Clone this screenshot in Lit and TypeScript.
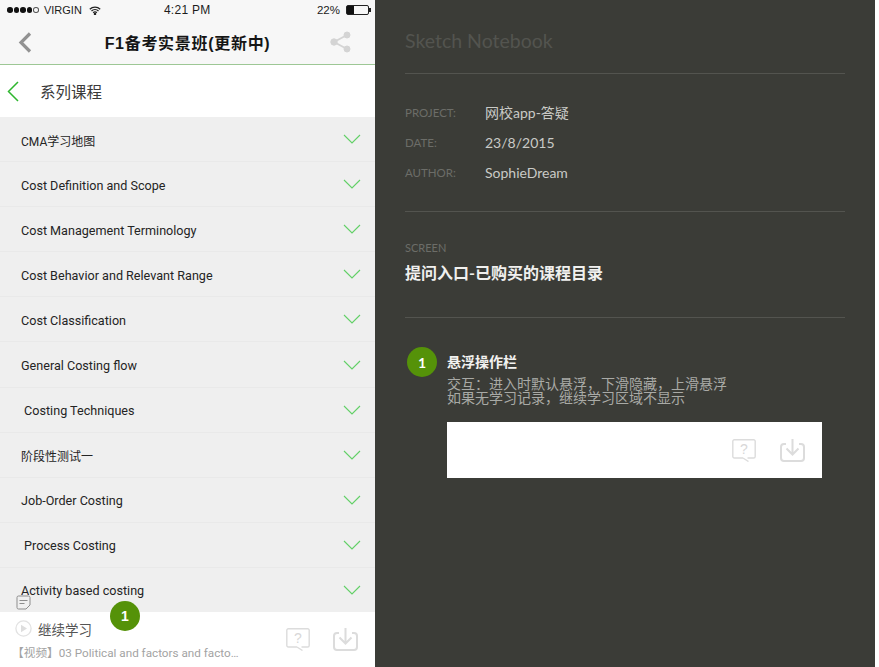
import { LitElement, html, css, svg } from 'lit';
import { customElement } from 'lit/decorators.js';

const COURSES = [
  'CMA学习地图',
  'Cost Definition and Scope',
  'Cost Management Terminology',
  'Cost Behavior and Relevant Range',
  'Cost Classification',
  'General Costing flow',
  '\u00a0Costing Techniques',
  '阶段性测试一',
  'Job-Order Costing',
  '\u00a0Process Costing',
  'Activity based costing',
];

const META = [
  ['PROJECT:', '网校app-答疑'],
  ['DATE:', '23/8/2015'],
  ['AUTHOR:', 'SophieDream'],
];

const askIcon = html`<svg width="24" height="23" viewBox="0 0 24 23" fill="none">
  <path d="M11 19H2.300A1.500 1.500 0 0 1 .8 17.500V2.300A1.500 1.500 0 0 1 2.300 .8h19.400a1.500 1.500 0 0 1 1.500 1.500v15.200a1.500 1.500 0 0 1-1.500 1.500H15.500M11 19l5.500 3.500" stroke="#dcdcdc" stroke-width="1.4"/>
  <text x="12" y="15" text-anchor="middle" class="ask-mark">?</text>
</svg>`;

const saveIcon = html`<svg width="25" height="23" viewBox="0 0 25 23" fill="none" stroke="#dcdcdc" stroke-width="2">
  <path d="M6 5H4A3 3 0 0 0 1 8v11a3 3 0 0 0 3 3h17a3 3 0 0 0 3-3V8a3 3 0 0 0-3-3h-2"/>
  <path d="M12.500 0v15M6.500 9.500l6 6 6-6"/>
</svg>`;

const chevronDown = svg`<path d="M1 1l8 8 8-8" stroke="#62d067" stroke-width="1.1" fill="none"/>`;

@customElement('app-root')
export class AppRoot extends LitElement {
  render() {
    return html`
      <section class="phone">
        <div class="status">
          <span class="signal">
            <i></i><i></i><i></i><i></i><i class="off"></i>
          </span>
          <span class="carrier">VIRGIN</span>
          <svg class="wifi" width="12" height="9" viewBox="0 0 12 9" fill="none" stroke="#222" stroke-width="1.3">
            <path d="M.8 3.200a7.400 7.400 0 0 1 10.400 0M2.500 5a5 5 0 0 1 7 0M4.200 6.700a2.500 2.500 0 0 1 3.600 0"/>
            <circle cx="6" cy="8" r=".6" fill="#222"/>
          </svg>
          <span class="clock">4:21 PM</span>
          <span class="pct">22%</span>
          <span class="battery"><b></b></span>
        </div>
        <div class="nav">
          <svg width="14" height="21" viewBox="0 0 14 21" fill="none" stroke="#929292" stroke-width="3.200">
            <path d="M12 1.500L3 10.500l9 9"/>
          </svg>
          <span class="nav-title">F1备考实景班(更新中)</span>
          <svg class="share" width="21" height="22" viewBox="0 0 21 22" fill="#d4d4d4" stroke="#d4d4d4">
            <circle cx="17" cy="4" r="3"/><circle cx="4" cy="11" r="3.200"/><circle cx="17" cy="18" r="3"/>
            <path d="M17 4L4 11l13 7" fill="none" stroke-width="1.800"/>
          </svg>
        </div>
        <div class="series">
          <svg width="12" height="21" viewBox="0 0 12 21" fill="none" stroke="#2eb62e" stroke-width="1.500">
            <path d="M11 1L1.500 10.500 11 20"/>
          </svg>
          <span>系列课程</span>
        </div>
        <div class="list">
          ${COURSES.map(
            (name) => html`
              <div class="row">
                <span class=${/[^\x00-\xff]/.test(name) ? 'zh' : ''}>${name}</span>
                <svg width="18" height="10" viewBox="0 0 18 10">${chevronDown}</svg>
              </div>
            `,
          )}
        </div>
        <div class="bar">
          <div class="bar-text">
            <div class="resume">
              <svg width="17" height="17" viewBox="0 0 17 17">
                <circle cx="8.500" cy="8.500" r="7.600" fill="none" stroke="#e2e2e2" stroke-width="1.300"/>
                <path d="M6 4.800v7.400l6-3.700z" fill="#dedede"/>
              </svg>
              <span>继续学习</span>
            </div>
            <div class="last">【视频】03 Political and factors and facto…</div>
          </div>
          <div class="bar-actions">${askIcon}${saveIcon}</div>
        </div>
        <svg class="note" width="15" height="15" viewBox="0 0 15 15" fill="#f0f0f0" stroke="#8d8d8d" stroke-width="1">
          <path d="M2.500 1h10A1.500 1.500 0 0 1 14 2.500V10l-4 4H2.500A1.500 1.500 0 0 1 1 12.500v-10A1.500 1.500 0 0 1 2.500 1z"/>
          <path d="M3.500 5.500h8M3.500 8.500h5" fill="none"/>
        </svg>
        <span class="badge pin">1</span>
      </section>
      <section class="notes">
        <h1>Sketch Notebook</h1>
        <div class="meta">
          ${META.map(
            ([label, value]) => html`
              <div class="meta-row"><span class="label">${label}</span><span class="value">${value}</span></div>
            `,
          )}
        </div>
        <div class="screen">
          <div class="label">SCREEN</div>
          <h2>提问入口-已购买的课程目录</h2>
        </div>
        <div class="item">
          <span class="badge">1</span>
          <div class="item-body">
            <h3>悬浮操作栏</h3>
            <p>交互：进入时默认悬浮，下滑隐藏，上滑悬浮<br />如果无学习记录，继续学习区域不显示</p>
            <div class="sample">${askIcon}${saveIcon}</div>
          </div>
        </div>
      </section>
    `;
  }

  static styles = css`
    :host {
      display: flex;
      width: 879px;
      height: 667px;
      overflow: hidden;
      background: #fff;
      font-family: 'Liberation Sans', 'Noto Sans CJK SC', sans-serif;
    }
    .phone {
      position: relative;
      flex: 0 0 375px;
      display: flex;
      flex-direction: column;
      background: #fff;
    }
    .status {
      height: 20px;
      display: flex;
      align-items: center;
      padding: 0 5px 0 7px;
      background: #f7f7f7;
      color: #1c1c1c;
      font-size: 11.500px;
    }
    .signal {
      display: flex;
      gap: 1px;
    }
    .signal i {
      width: 5.600px;
      height: 5.600px;
      border-radius: 50%;
      background: #111;
    }
    .signal i.off {
      background: none;
      box-shadow: inset 0 0 0 1px #555;
    }
    .carrier {
      margin-left: 5px;
      font-size: 11px;
    }
    .wifi {
      margin-left: 7px;
    }
    .clock {
      margin-left: 63px;
      font-size: 12px;
      letter-spacing: 0.300px;
    }
    .pct {
      margin-left: auto;
      font-size: 11.500px;
    }
    .battery {
      position: relative;
      margin-left: 6px;
      margin-right: 1px;
      width: 21px;
      height: 8px;
      border: 1px solid #222;
      border-radius: 2px;
    }
    .battery b {
      display: block;
      width: 7px;
      height: 100%;
      background: #111;
    }
    .battery::after {
      content: '';
      position: absolute;
      right: -3px;
      top: 2px;
      width: 2px;
      height: 4px;
      background: #222;
    }
    .nav {
      height: 45px;
      box-sizing: border-box;
      display: grid;
      grid-template-columns: 1fr auto 1fr;
      align-items: center;
      padding: 0 18px;
      background: #f7f7f7;
      border-bottom: 1px solid #9dc795;
    }
    .nav-title {
      font-size: 16px;
      font-weight: 700;
      letter-spacing: 0.700px;
      color: #151515;
    }
    .share {
      justify-self: end;
      margin-right: 6px;
    }
    .series {
      height: 52px;
      flex: none;
      display: flex;
      align-items: center;
      gap: 21px;
      padding-left: 7px;
      font-size: 15.500px;
      color: #3a3a3a;
      background: #fff;
    }
    .list {
      height: 495px;
      flex: none;
      overflow: hidden;
      background: #efefef;
    }
    .row {
      height: 45.100px;
      box-sizing: border-box;
      display: flex;
      align-items: center;
      justify-content: space-between;
      padding: 2px 14px 0 21px;
      border-bottom: 1px solid #e9e9e9;
      font-family: Roboto, 'Noto Sans CJK SC', sans-serif;
      font-size: 12.600px;
      color: #242424;
    }
    .row .zh {
      font-size: 12px;
    }
    .row svg {
      margin-bottom: 2px;
    }
    .bar {
      flex: 1;
      display: flex;
      justify-content: space-between;
      padding: 8px 17px 0 15px;
      background: #fff;
    }
    .bar-text {
      min-width: 0;
    }
    .resume {
      display: flex;
      align-items: center;
      gap: 6px;
      height: 17px;
      font-size: 13.500px;
      color: #555;
    }
    .last {
      margin: 6px 0 0 -3px;
      font-family: Roboto, 'Noto Sans CJK SC', sans-serif;
      font-size: 11.700px;
      color: #a3a3a3;
      white-space: nowrap;
    }
    .bar-actions,
    .sample {
      display: flex;
      align-items: center;
      gap: 23px;
    }
    .bar-actions {
      height: 23px;
      margin-top: 8px;
    }
    .ask-mark {
      font-family: 'Liberation Sans', sans-serif;
      font-size: 14px;
      fill: #d8d8d8;
    }
    .note {
      position: absolute;
      left: 16px;
      top: 595px;
    }
    .badge {
      flex: none;
      width: 30px;
      height: 30px;
      border-radius: 50%;
      display: flex;
      align-items: center;
      justify-content: center;
      background: #559209;
      color: #fff;
      font-size: 14px;
      font-weight: 700;
    }
    .pin {
      position: absolute;
      left: 110px;
      top: 601px;
    }
    .notes {
      flex: 0 0 500px;
      box-sizing: border-box;
      background: #3b3c37;
      padding: 0 30px;
      font-family: Lato, 'Noto Sans CJK SC', sans-serif;
    }
    h1 {
      margin: 0;
      height: 74px;
      box-sizing: border-box;
      padding-top: 28px;
      border-bottom: 1px solid #53544f;
      font-size: 19.500px;
      line-height: 26px;
      font-weight: 400;
      color: #53544f;
    }
    .meta {
      height: 138px;
      box-sizing: border-box;
      padding-top: 23px;
      border-bottom: 1px solid #53544f;
    }
    .meta-row {
      display: flex;
      align-items: center;
      height: 30px;
    }
    .label {
      color: #6c6d68;
      font-size: 11.500px;
    }
    .meta-row .label {
      width: 80px;
    }
    .value {
      color: #c9cac6;
      font-size: 14px;
    }
    .screen {
      height: 106px;
      box-sizing: border-box;
      padding-top: 29px;
      border-bottom: 1px solid #53544f;
    }
    .screen .label {
      font-size: 11px;
      line-height: 14px;
    }
    h2 {
      margin: 7px 0 0;
      font-size: 16px;
      line-height: 22px;
      font-weight: 700;
      color: #f0f0ee;
    }
    .item {
      display: flex;
      gap: 10px;
      padding: 29px 0 0 2px;
    }
    .item-body {
      flex: 1;
      min-width: 0;
    }
    h3 {
      margin: 7px 0 0;
      font-family: 'Liberation Sans', 'Noto Sans CJK SC', sans-serif;
      font-size: 14px;
      line-height: 16px;
      font-weight: 700;
      color: #f2f2f0;
    }
    p {
      margin: 7px 0 0;
      font-family: 'Liberation Sans', 'Noto Sans CJK SC', sans-serif;
      font-size: 14px;
      line-height: 14px;
      color: #a9aaa6;
    }
    .sample {
      margin-top: 17px;
      width: 375px;
      height: 56px;
      box-sizing: border-box;
      justify-content: flex-end;
      gap: 24px;
      padding: 0 17px 0 0;
      background: #fff;
    }
  `;
}
